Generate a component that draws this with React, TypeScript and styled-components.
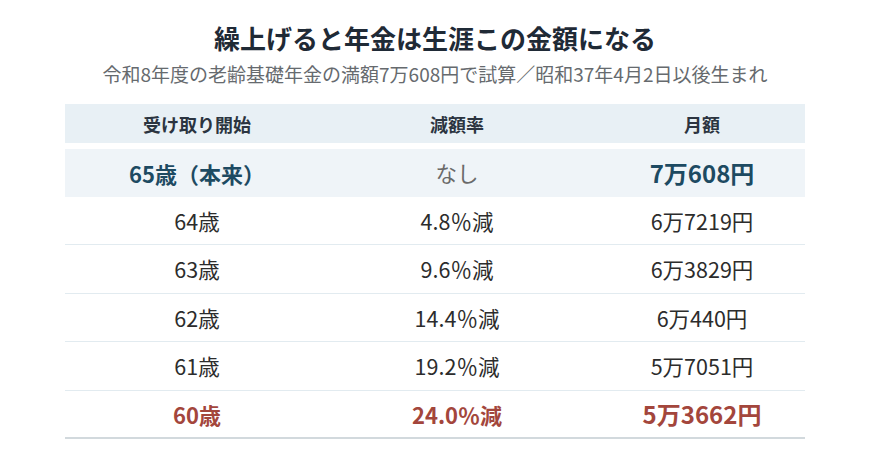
import React from "react";
import styled, { createGlobalStyle } from "styled-components";

const Global = createGlobalStyle`
  html, body { margin: 0; padding: 0; background: #ffffff; }
  body { font-family: "Noto Sans CJK JP", "Noto Sans", sans-serif; }
`;

const Page = styled.div`
  width: 870px;
  height: 456px;
  display: flex;
  flex-direction: column;
  align-items: center;
  box-sizing: border-box;
  padding-top: 18px;
`;

const Title = styled.h1`
  margin: 0;
  font-size: 26px;
  line-height: 40px;
  font-weight: 700;
  color: #1f2a36;
`;

const Subtitle = styled.p`
  margin: 0;
  margin-top: 1px;
  font-size: 19px;
  line-height: 30px;
  color: #666a6e;
`;

const Table = styled.div`
  width: 740px;
  margin-top: 15px;
  display: flex;
  flex-direction: column;
`;

const Row = styled.div<{ $variant?: "head" | "base" | "normal" | "last" }>`
  display: grid;
  grid-template-columns: 264px 256px 220px;
  align-items: center;
  height: ${(p) => (p.$variant === "head" ? "39px" : p.$variant === "base" ? "48px" : "48.4px")};
  background: ${(p) =>
    p.$variant === "head" ? "#e8f0f5" : p.$variant === "base" ? "#eff4f8" : "#ffffff"};
  margin-bottom: ${(p) => (p.$variant === "head" ? "6px" : "0")};
  border-bottom: ${(p) =>
    p.$variant === "last"
      ? "2px solid #d2d9dd"
      : p.$variant === "normal"
      ? "1px solid #e2ebf0"
      : "none"};
  box-sizing: border-box;
`;

type Tone = "head" | "base" | "muted" | "normal" | "alert";

const toneColor: Record<Tone, string> = {
  head: "#2b3440",
  base: "#1d4a62",
  muted: "#6a6a6a",
  normal: "#2c2c2c",
  alert: "#a3463c",
};

const Cell = styled.div<{ $tone: Tone; $bold?: boolean; $size: number; $last?: boolean }>`
  text-align: center;
  padding-left: ${(p) => (p.$last ? "14px" : "0")};
  font-size: ${(p) => p.$size}px;
  font-weight: ${(p) => (p.$bold ? 700 : 400)};
  color: ${(p) => toneColor[p.$tone]};
  line-height: 1;
`;

const rows: { age: string; rate: string; amount: string }[] = [
  { age: "64歳", rate: "4.8％減", amount: "6万7219円" },
  { age: "63歳", rate: "9.6％減", amount: "6万3829円" },
  { age: "62歳", rate: "14.4％減", amount: "6万440円" },
  { age: "61歳", rate: "19.2％減", amount: "5万7051円" },
];

export default function App() {
  return (
    <>
      <Global />
      <Page>
        <Title>繰上げると年金は生涯この金額になる</Title>
        <Subtitle>令和8年度の老齢基礎年金の満額7万608円で試算／昭和37年4月2日以後生まれ</Subtitle>
        <Table>
          <Row $variant="head">
            <Cell $tone="head" $bold $size={18}>受け取り開始</Cell>
            <Cell $tone="head" $bold $size={18}>減額率</Cell>
            <Cell $tone="head" $bold $size={18} $last>月額</Cell>
          </Row>
          <Row $variant="base">
            <Cell $tone="base" $bold $size={22}>65歳（本来）</Cell>
            <Cell $tone="muted" $size={21.5}>なし</Cell>
            <Cell $tone="base" $bold $size={24} $last>7万608円</Cell>
          </Row>
          {rows.map((r) => (
            <Row key={r.age} $variant="normal">
              <Cell $tone="normal" $size={21.5}>{r.age}</Cell>
              <Cell $tone="normal" $size={21.5}>{r.rate}</Cell>
              <Cell $tone="normal" $size={21.5} $last>{r.amount}</Cell>
            </Row>
          ))}
          <Row $variant="last">
            <Cell $tone="alert" $bold $size={22}>60歳</Cell>
            <Cell $tone="alert" $bold $size={22}>24.0％減</Cell>
            <Cell $tone="alert" $bold $size={24} $last>5万3662円</Cell>
          </Row>
        </Table>
      </Page>
    </>
  );
}
